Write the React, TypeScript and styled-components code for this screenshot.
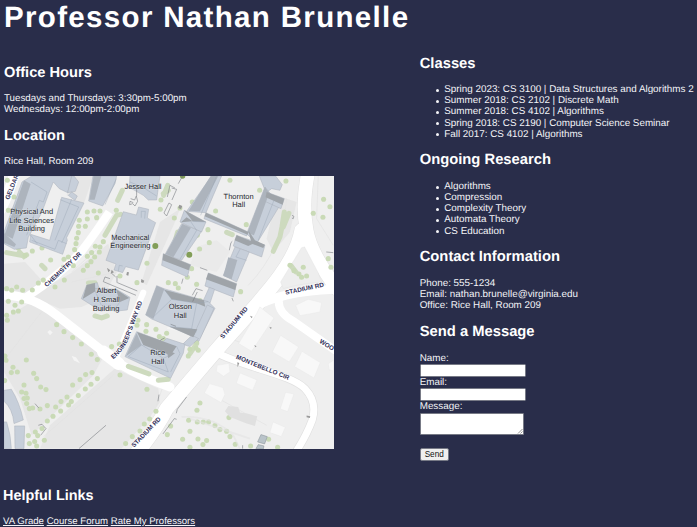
import React from "react";
import styled, { createGlobalStyle } from "styled-components";

const GlobalStyle = createGlobalStyle`
  * { box-sizing: border-box; }
  html, body { margin: 0; padding: 0; background: #292d4a; }
  body { overflow: hidden; text-rendering: geometricPrecision; }
`;

const Page = styled.div`
  width: 697px;
  height: 527px;
  overflow: hidden;
  background: #292d4a;
  color: #f4f4f8;
  font: 9.85px/11.1px "Liberation Sans", Arial, sans-serif;
`;

const Title = styled.h1`
  margin: 0;
  padding: 0.6px 0 0 4px;
  height: 54.8px;
  font-size: 29.5px;
  line-height: 34.8px;
  letter-spacing: 1.33px;
  color: #fff;
  white-space: nowrap;
`;

const Columns = styled.div`
  display: grid;
  grid-template-columns: 415.7px 1fr;
  height: 432px;
`;

const Section = styled.section`
  margin-bottom: 11.9px;
`;

const LeftColumn = styled.main`
  padding: 9.1px 0 0 4px;
  font-size: 9.76px;
  ${Section} {
    margin-bottom: 11.4px;
  }
`;

const RightColumn = styled.aside`
  padding-left: 4px;
`;

const Heading = styled.h2`
  margin: 0 0 11.7px;
  padding-top: 0.8px;
  font-size: 1.5em;
  line-height: 17px;
  color: #fff;
`;

const Text = styled.p`
  margin: 0;
  white-space: nowrap;
`;

const List = styled.ul`
  margin: 0;
  padding: 0 0 0 24.6px;
  list-style: none;
  white-space: nowrap;
`;

const Item = styled.li`
  display: flex;
  align-items: center;
  margin-left: -8.6px;
  &::before {
    content: "";
    width: 3.2px;
    height: 3.2px;
    margin: 1px 5.4px 0 0;
    border-radius: 50%;
    background: #f4f4f8;
  }
`;

const Map = styled.svg`
  display: block;
  width: 329.6px;
  height: 272.6px;
  margin-top: 8.9px;
`;

const Form = styled.form`
  display: flex;
  flex-direction: column;
  align-items: flex-start;
`;

const Label = styled.label`
  display: block;
  height: 11.3px;
`;

const Input = styled.input`
  width: 106px;
  height: 13px;
  padding: 0 2px;
  border: 1px solid #777a86;
  border-radius: 1.5px;
  background: #fff;
  font: 8.5px "Liberation Sans", Arial, sans-serif;
`;

const MessageBox = styled.div`
  display: grid;
  width: 104px;
  height: 22.5px;
`;

const TextArea = styled.textarea`
  grid-area: 1 / 1;
  width: 100%;
  height: 100%;
  padding: 1px;
  resize: none;
  border: 1px solid #777a86;
  border-radius: 1px;
  background: #fff;
`;

const Grip = styled.svg`
  grid-area: 1 / 1;
  place-self: end;
  width: 6px;
  height: 6px;
  margin: 0 1px 1px 0;
  pointer-events: none;
`;

const SendButton = styled.button`
  width: 29px;
  height: 13px;
  margin-top: 13px;
  padding: 0;
  border: 1px solid #777a86;
  border-radius: 2px;
  background: #efefef;
  color: #111;
  font: 8.2px/11px "Liberation Sans", Arial, sans-serif;
`;

const Footer = styled.footer`
  padding: 0.7px 0 0 3px;
  font-size: 9.62px;
`;

const Links = styled.nav`
  display: flex;
  gap: 2.7px;
  margin-top: -0.9px;
`;

const Link = styled.a`
  color: #f4f4f8;
  text-decoration: underline;
  text-decoration-thickness: 1px;
  text-underline-offset: 1px;
`;

const MapLabel = styled.text`
  font: 22.5px "Liberation Sans", Arial, sans-serif;
  fill: #24272c;
  stroke: rgba(239, 241, 243, 0.45);
  stroke-width: 3px;
  paint-order: stroke;
  text-anchor: middle;
`;

const RoadLabel = styled.text<{ $start?: boolean }>`
  font: bold 19px "Liberation Sans", Arial, sans-serif;
  fill: #322f58;
  stroke: #fff;
  stroke-width: 3px;
  paint-order: stroke;
  text-anchor: ${(p) => (p.$start ? "start" : "middle")};
`;

const classes = [
  "Spring 2023: CS 3100 | Data Structures and Algorithms 2",
  "Summer 2018: CS 2102 | Discrete Math",
  "Summer 2018: CS 4102 | Algorithms",
  "Spring 2018: CS 2190 | Computer Science Seminar",
  "Fall 2017: CS 4102 | Algorithms",
];
const research = ["Algorithms", "Compression", "Complexity Theory", "Automata Theory", "CS Education"];

const trees: [number, number][] = [
  [42,75],[25,115],[22,25],[262,120],[262,141],[282,117],[300,117],[290,137],[238,145],[236,163],[256,163],[235,182],[230,199],[228,215],[224,233],[205,255],[192,262],[250,295],[262,281],[273,269],[284,255],[262,253],[275,242],[298,240],[300,225],[286,223],[310,209],[220,281],[190,285],[152,264],[126,228],[97,237],[55,228],[75,250],[130,324],[115,333],[165,345],[68,355],[50,345],[35,355],[20,350],[97,354],[193,324],[441,274],[483,84],[481,112],[411,332],[295,303],[349,115],[360,312],
  [690,25],[779,55],[647,117],[739,158],[593,98],[540,108],[523,138],[577,90],[592,190],[624,173],[628,212],[599,231],[575,290],[562,316],[590,337],[526,335],[535,348],[505,332],[600,386],[722,359],[858,27],[971,82],[940,124],[969,136],[990,104],[985,260],[993,286],[870,280],[882,296],[910,286],[920,312],[897,306],[905,316],
  [25,388],[45,400],[65,390],[40,420],[20,430],[55,417],[22,445],[170,458],[192,479],[218,497],[244,516],[274,547],[292,563],[276,602],[257,608],[240,623],[218,639],[256,651],[235,671],[273,637],[201,675],[183,689],[206,699],[167,705],[214,689],[182,717],[159,733],[142,747],[292,620],[79,564],[39,586],[34,602],[52,600],[101,604],[110,620],[72,639],[122,645],[138,653],[65,660],[78,664],[82,678],[72,680],[80,695],[98,708],[88,710],[120,711],[142,701],[106,780],[126,770],[85,791],[113,791],[133,805],[104,809],[88,815],[110,822],[335,524],[358,516],[360,609],[441,652],[468,718],[449,741],[433,756],[420,777],[397,794],[377,815],[414,445],[440,458],[438,478],[468,472],[500,484],[478,494],[490,500],[411,460],[15,552],[18,565],[14,626],
  [590,512],[588,528],[565,552],[595,535],[570,532],[600,693],[591,715],[566,745],[592,750],[610,750],[626,750],[645,761],[660,773],[680,778],[690,794],[687,737],[570,778],[594,801],[620,806],[609,818],[706,817],[752,822],[548,802],[570,826],[806,802],[833,826],[512,762],[502,788],
];

function CampusMap() {
  return (
    <Map viewBox="12 12 989 818" preserveAspectRatio="none" aria-label="Campus map">
      <rect x="0" y="0" width="1010" height="840" fill="#efefef" />
      <g fill="#e6e6e6">
        <path d="M12 440L90 392 130 396 310 555 280 610 95 790 60 680 12 600Z" />
        <path d="M215 302L325 215 350 300 310 375 245 405 180 410 90 372Z" />
        <path d="M345 590L475 650 480 690 450 735 365 830 120 830 150 760Z" />
        <path d="M12 275L75 270 130 330 90 365 12 350Z" />
        <path d="M480 150L540 110 525 150 440 340 425 330Z" />
        <path d="M830 70L890 90 870 180 820 240 800 200Z" />
        <path d="M590 225L650 205 690 240 650 300 570 280Z" fill="#eaeaea" />
        <path d="M215 12L280 12 250 100 200 70Z" />
      </g>
      <g fill="#f4f4f4">
        <path d="M142 480L150 474 158 482 150 490ZM215 552L228 556 240 574 222 566Z" />
        <path d="M520 440L560 450 555 480 500 470Z" />
      </g>
      <g fill="none" stroke="#e2e2e2" strokeWidth="2" strokeLinejoin="round">
        <path d="M310 215L215 300M12 565L140 400M340 610L130 795M955 12L950 140 1000 220" />
        <path d="M860 80Q850 230 745 340M620 660L800 760M720 460L780 390M745 520L690 500" />
        <path d="M350 300L215 330M490 640L470 700" />
      </g>

      <g fill="none" stroke="#e1e1e1" strokeLinecap="round" strokeLinejoin="round">
        <path d="M925 0Q905 95 920 175C932 240 970 290 1010 350" strokeWidth="44" />
        <path d="M905 175C885 290 765 400 650 534L500 710Q470 770 405 850" strokeWidth="46" />
        <path d="M645 540C740 590 870 605 915 650Q953 690 937 744Q920 790 888 840" strokeWidth="25" />
      </g>
      <g fill="none" stroke="#fff" strokeLinejoin="round" strokeLinecap="round">
        <path d="M925 0Q905 95 920 175C932 240 970 290 1010 350" strokeWidth="41" />
        <path d="M905 175C885 290 765 400 650 534L500 710Q470 770 405 850" strokeWidth="43" />
        <path d="M740 420Q825 358 1005 352" strokeWidth="27" />
        <path d="M838 375Q828 420 880 447L1005 535" strokeWidth="24" />
        <path d="M645 540C740 590 870 605 915 650Q953 690 937 744Q920 790 888 840" strokeWidth="21" />
        <path d="M328 120Q285 185 246 236Q180 310 80 375" strokeWidth="25" strokeLinecap="butt" />
        <path d="M0 370Q90 365 170 430L315 543Q380 600 510 645" strokeWidth="27" />
        <path d="M310 540L355 575" strokeWidth="38" />
        <path d="M430 362Q390 460 350 554" strokeWidth="18" />
        <path d="M44 0Q30 60 0 115" strokeWidth="32" />
      </g>
      <path d="M842 330L905 227 914 225 955 303 965 330Q900 335 850 350Z" fill="#eee" stroke="#dedede" />

      <path
        d="M353 85L367 55M491 70L503 40M315 190L335 155 350 130 362 127M58 240L72 254 80 249M505 55L490 65M526 205L533 180M820 238L840 195 846 165 853 120M867 124L850 165M680 181L697 188M873 281L888 300M285 432L305 438 322 432M385 583L447 606M475 625L505 622M20 242L75 252M570 545L590 515M265 333L285 332M125 280L135 290"
        fill="none" stroke="#cddabe" strokeWidth="15" strokeLinecap="round"
      />
      <g fill="#c9dab6">
        {trees.map(([x, y], i) => <circle key={i} cx={x} cy={y} r={7.6} />)}
      </g>
      <g fill="#829e58"><circle cx="466" cy="222" r="9" /><circle cx="568" cy="248" r="9" /><circle cx="548" cy="12" r="8" /></g>

      <g fill="#c7cfda" stroke="#a9b1bb" strokeWidth="1.5" strokeLinejoin="round">
        <path d="M95 12L218 12 203 62 178 50 160 30 148 60 126 120 85 196 79 228 43 232 12 215 12 180 66 30Z" />
        <path d="M215 12L222 12 236 30 226 58 203 62ZM205 70L215 60 232 72 225 85Z" />
        <path d="M185 76L252 93 200 197 202 205 188 247 89 210 92 187 149 205Z" />
        <path d="M279 12L350 12 345 35 308 102 266 87Z" />
        <path d="M390 12L480 12 470 84 445 84 430 70 388 46Z" />
        <path d="M370 119L409 129 416 105 446 112 442 138 467 152 415 294 377 284 368 302 342 294 348 276 318 265Z" />
        <path d="M260 340L292 332 298 352 350 352 390 376 382 414 342 418 335 405 304 418 244 380Z" />

        <path d="M635 12L665 12 618 122 560 118Z" />
        <path d="M545 155L605 178 545 265 495 248Z" />
        <path d="M553 115L618 150 605 180 540 150Z" />
        <path d="M490 245L572 278 562 315 485 280Z" />
        <path d="M618 122L745 180 740 192 612 140Z" />
        <path d="M778 12L827 12 847 38 840 55 815 50 798 62Z" />
        <path d="M795 45L840 100 770 215 740 185Z" />
        <path d="M800 60L853 80 843 110 795 88Z" />
        <path d="M710 190L795 220 785 255 700 222Z" />
        <path d="M705 225L748 240 710 330 670 310Z" />
        <path d="M625 303L710 335 700 375 615 342Z" />
        <path d="M628 346L644 352 630 394 610 386Z" />

        <path d="M470 341L495 351 625 389 645 409 600 499 570 490 455 441 437 429Z" />
        <path d="M622 399L642 409 597 508 578 496Z" />
        <path d="M576 490L596 500 570 524 548 517Z" />
        <path d="M410 479L490 509 500 499 555 517 550 544 512 619 375 554Z" />
        <path d="M12 655L34 652Q58 690 70 744L42 755Q38 710 12 688ZM44 762L74 762 72 830 45 830ZM12 750L20 750Q33 790 34 830L12 830Z" />
      </g>
      <g fill="#adb4bd">
        <path d="M72 25L92 36 38 200 14 188Z" />
        <path d="M281 12L304 12 284 83 268 83Z" />
        <path d="M632 12L655 12 600 118 566 116Z" />
        <path d="M547 156L573 167 520 256 497 246Z" />
        <path d="M795 45L808 62 762 190 742 182Z" />
        <path d="M685 256L712 264 695 322 670 312Z" />
        <path d="M470 341L493 351 460 441 437 429Z" />
        <path d="M410 484L425 519 378 553Z" />
        <path d="M12 183L48 217 43 225 12 212Z" />
      </g>
      <g fill="#9fa4a9">
        <path d="M553 115L618 150 578 148ZM543 151L578 148 560 136Z" />
        <path d="M490 245L572 278 566 295 488 265Z" />
        <path d="M618 122L745 180 743 188 614 133Z" />
        <path d="M800 60L853 80 848 98 797 76Z" />
        <path d="M745 175L755 215 790 228 795 218 765 205Z" />
        <path d="M710 190L765 212 745 222 704 205Z" />
        <path d="M625 303L710 335 706 354 618 322Z" />
        <path d="M493 353L612 385 616 404 590 394 515 382Z" />
        <path d="M510 464L592 472 580 496Z" />
        <path d="M411 480L530 523 512 550 430 519Z" />
        <path d="M500 535L525 544 505 559Z" />
        <path d="M260 339L285 333 286 358 248 381ZM348 352L388 378 360 390Z" />
      </g>
      <g fill="none" stroke="#98a4b3" strokeWidth="1.2" strokeLinejoin="round">
        <path d="M93 30L141 60 130 90 118 85 80 190M180 83L236 105 185 213M95 205L165 232 175 205 200 215M91 188L112 216M215 82L165 205" />
        <path d="M349 20L315 98M390 30L430 47 470 72M424 137L424 118 436 118 434 140M355 298L358 280 368 282" />
        <path d="M650 12L602 130M573 150L590 175 540 262M578 148L618 150M822 85L775 205M720 232L708 255 740 265" />
        <path d="M493 353L515 382 460 435M515 382L590 394 575 470 510 464M590 394L625 389M575 470L590 480" />
        <path d="M425 519L490 559 505 600M425 519L385 554 505 600M530 523L540 545 512 600M490 559L512 550" />
        <path d="M285 350L348 352M286 358L304 400M360 390L345 410" />
      </g>

      <g fill="#f8f8f8" stroke="#e8e8e8" strokeWidth="1.3">
        <path d="M770 425L780 405 822 438 755 538 716 515Z" />
        <path d="M842 490L896 525 868 570 817 540ZM906 538L961 572 942 618 884 584Z" />
        <path d="M652 580L687 574 690 600 671 613 649 598ZM720 603L771 624 758 655 709 634ZM629 635L669 647 675 668 663 692 613 663ZM857 661L882 666 863 719 841 711ZM819 750L856 766 844 794 810 782Z" />
        <path d="M887 400L925 382 965 392 960 420 900 431Z" />
        <path d="M985 575L1001 565 1001 597 988 594Z" />
      </g>
      <path d="M675 718L685 702 715 705 720 722 742 725 772 733 765 762 740 755 690 735Z" fill="#e0e0e0" />
      <path d="M545 735Q640 730 700 790L720 830M570 740L750 800" fill="none" stroke="#e2e2e2" strokeWidth="5" opacity="0.6" />
      <g fill="#b9c3c9" stroke="#858e93" strokeWidth="1.5">
        <path d="M783 788L802 794 794 816 773 810ZM775 818L792 822 790 832 768 830Z" />
      </g>
      <g fill="none" stroke="#73777c" strokeWidth="1.7" strokeLinejoin="round">
        <path d="M392 80L404 84 409 72 413 88 405 102 398 95 389 98 390 88 400 92M410 40L410 72" />
        <path d="M315 315L310 329 408 370M315 315L330 320M352 332L412 357M334 303L347 315M351 312L351 332" />
        <path d="M492 123L507 93 515 98 500 132ZM502 75L510 40 525 48M516 84L530 52 515 48M535 35L548 12" />
        <path d="M688 235L693 212 697 208M600 287L622 295M577 370L588 350 608 356M578 389L592 360M979 240L1000 242M876 130L882 133 880 140 876 138" />
        <path d="M480 505L494 498M477 668L474 688M512 457L528 463M545 335L549 320M696 378L700 388" />
        <path d="M237 830L318 760M489 786L523 740 530 742M529 724L532 712 560 675M115 760L126 757 138 770 122 790M105 695L116 708M728 820L728 830" />
      </g>
      <g fill="#999">
        <path d="M321 287L331 295 325 301ZM335 293L342 301 332 305ZM381 300L387 301 385 311 379 309ZM424 321L433 326 430 333 423 331ZM750 431L758 434 755 439ZM808 464L816 467 812 471ZM763 519L770 523 766 526ZM712 571L718 573 713 586ZM920 731L931 733 930 738 920 736ZM538 98L547 102 543 112 535 108Z" />
      </g>

      <MapLabel x="95" y="125">Physical And</MapLabel>
      <MapLabel x="95" y="152">Life Sciences</MapLabel>
      <MapLabel x="95" y="178">Building</MapLabel>
      <MapLabel x="429" y="52">Jesser Hall</MapLabel>
      <MapLabel x="391" y="203">Mechanical</MapLabel>
      <MapLabel x="391" y="229">Engineering</MapLabel>
      <MapLabel x="716" y="80">Thornton</MapLabel>
      <MapLabel x="716" y="106">Hall</MapLabel>
      <MapLabel x="320" y="363">Albert</MapLabel>
      <MapLabel x="320" y="389">H Small</MapLabel>
      <MapLabel x="318" y="416">Building</MapLabel>
      <MapLabel x="541" y="412">Olsson</MapLabel>
      <MapLabel x="541" y="437">Hall</MapLabel>
      <MapLabel x="473" y="550">Rice</MapLabel>
      <MapLabel x="473" y="577">Hall</MapLabel>

      <defs><path id="engineers-way" d="M340 562Q374 535 390 490L434 372" /></defs>
      <RoadLabel $start transform="translate(27 84) rotate(-68)">GELDAR</RoadLabel>
      <RoadLabel transform="translate(193 297) rotate(-43)">CHEMISTRY DR</RoadLabel>
      <RoadLabel $start><textPath href="#engineers-way">ENGINEER'S WAY RD</textPath></RoadLabel>
      <RoadLabel transform="translate(915 356) rotate(-12)">STADIUM RD</RoadLabel>
      <RoadLabel transform="translate(707 456) rotate(-50)">STADIUM RD</RoadLabel>
      <RoadLabel transform="translate(443 785) rotate(-46)">STADIUM RD</RoadLabel>
      <RoadLabel transform="translate(786 592) rotate(22)">MONTEBELLO CIR</RoadLabel>
      <RoadLabel $start transform="translate(957 512) rotate(31)">WOO</RoadLabel>
    </Map>
  );
}

export default function App() {
  return (
    <>
      <GlobalStyle />
      <Page>
        <Title>Professor Nathan Brunelle</Title>
        <Columns>
          <LeftColumn>
            <Section>
              <Heading>Office Hours</Heading>
              <Text>Tuesdays and Thursdays: 3:30pm-5:00pm</Text>
              <Text>Wednesdays: 12:00pm-2:00pm</Text>
            </Section>
            <Section>
              <Heading>Location</Heading>
              <Text>Rice Hall, Room 209</Text>
              <CampusMap />
            </Section>
          </LeftColumn>
          <RightColumn>
            <Section>
              <Heading>Classes</Heading>
              <List>{classes.map((c) => <Item key={c}>{c}</Item>)}</List>
            </Section>
            <Section>
              <Heading>Ongoing Research</Heading>
              <List>{research.map((r) => <Item key={r}>{r}</Item>)}</List>
            </Section>
            <Section>
              <Heading>Contact Information</Heading>
              <Text>Phone: 555-1234</Text>
              <Text>Email: nathan.brunelle@virginia.edu</Text>
              <Text>Office: Rice Hall, Room 209</Text>
            </Section>
            <Section>
              <Heading>Send a Message</Heading>
              <Form onSubmit={(e) => e.preventDefault()}>
                <Label htmlFor="name">Name:</Label>
                <Input id="name" />
                <Label htmlFor="email">Email:</Label>
                <Input id="email" />
                <Label htmlFor="message">Message:</Label>
                <MessageBox>
                  <TextArea id="message" />
                  <Grip viewBox="0 0 6 6" stroke="#666" strokeWidth=".7">
                    <path d="M1 5.5L5.5 1M3.5 5.5L5.5 3.5" />
                  </Grip>
                </MessageBox>
                <SendButton type="submit">Send</SendButton>
              </Form>
            </Section>
          </RightColumn>
        </Columns>
        <Footer>
          <Heading>Helpful Links</Heading>
          <Links>
            <Link href="#grade">VA Grade</Link>
            <Link href="#forum">Course Forum</Link>
            <Link href="#rate">Rate My Professors</Link>
          </Links>
        </Footer>
      </Page>
    </>
  );
}
